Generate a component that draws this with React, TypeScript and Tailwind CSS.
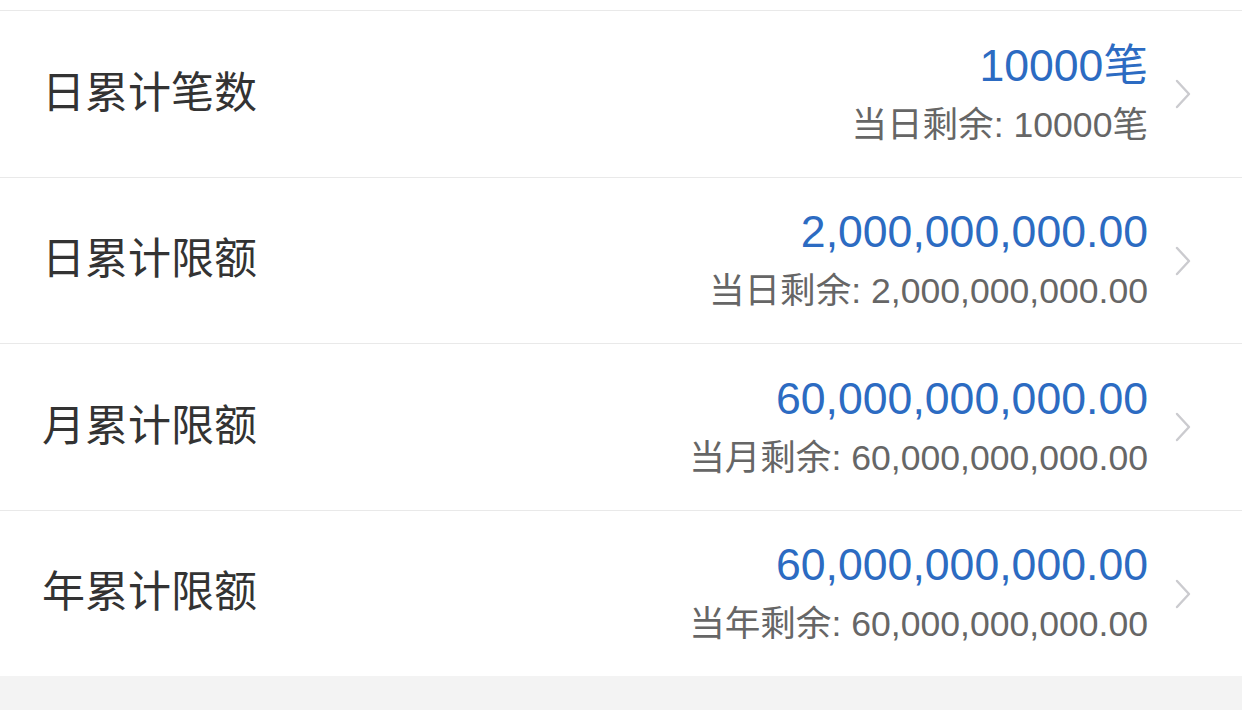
import React from 'react';

interface LimitRow {
  label: string;
  value: string;
  remainLabel: string;
  remain: string;
  height: string;
}

const rows: LimitRow[] = [
  { label: '日累计笔数', value: '10000笔', remainLabel: '当日剩余', remain: '10000笔', height: 'h-[167px]' },
  { label: '日累计限额', value: '2,000,000,000.00', remainLabel: '当日剩余', remain: '2,000,000,000.00', height: 'h-[166px]' },
  { label: '月累计限额', value: '60,000,000,000.00', remainLabel: '当月剩余', remain: '60,000,000,000.00', height: 'h-[167px]' },
  { label: '年累计限额', value: '60,000,000,000.00', remainLabel: '当年剩余', remain: '60,000,000,000.00', height: 'h-[166px]' },
];

const Chevron = () => (
  <svg width="18" height="30" viewBox="0 0 18 30" fill="none" className="shrink-0">
    <path d="M3 2 L15 15 L3 28" stroke="#cbcbcf" strokeWidth="2.4" strokeLinecap="round" strokeLinejoin="round" />
  </svg>
);

export default function App() {
  return (
    <div
      className="w-[1242px] h-[710px] bg-[#f3f3f3] overflow-hidden"
      style={{ fontFamily: '"Liberation Sans", "Noto Sans CJK SC", sans-serif' }}
    >
      <div className="bg-white pt-[10px]">
        {rows.map((row) => (
          <div
            key={row.label}
            className={`${row.height} flex items-center border-t border-[#e9e9e9] pl-[42px] pr-[50px]`}
          >
            <div className="flex-1 pb-[2px] text-[43px] text-[#333333] leading-none">{row.label}</div>
            <div className="flex flex-col items-end mr-[26px] pb-[2px]">
              <div className="text-[44.6px] leading-[44px] text-[#2c6bc2]">{row.value}</div>
              <div className="mt-[20px] text-[35.6px] leading-[35px] text-[#666666]">
                {row.remainLabel}: {row.remain}
              </div>
            </div>
            <Chevron />
          </div>
        ))}
      </div>
    </div>
  );
}
